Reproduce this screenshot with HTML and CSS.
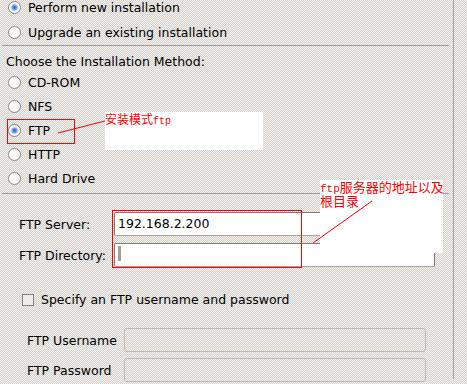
FILE: index.html
```html
<!DOCTYPE html>
<html lang="en">
<head>
    <meta charset="UTF-8">
    <title>Installation Method</title>
    <link rel="stylesheet" href="styles.css">
</head>
<body>

    <div class="page">
        <div class="panel">
            <div class="group group-top">
                <label class="choice"><span class="radio on"></span>Perform new installation</label>
                <label class="choice"><span class="radio"></span>Upgrade an existing installation</label>
            </div>
            <div class="sep"></div>

            <div class="heading">Choose the Installation Method:</div>
            <div class="group">
                <label class="choice"><span class="radio"></span>CD-ROM</label>
                <label class="choice"><span class="radio"></span>NFS</label>
                <label class="choice"><span class="radio on"></span>FTP</label>
                <label class="choice"><span class="radio"></span>HTTP</label>
                <label class="choice"><span class="radio"></span>Hard Drive</label>
            </div>
            <div class="sep sep-low"></div>

            <div class="server-form">
                <span class="field-label">FTP Server:</span>
                <div class="entry">192.168.2.200</div>
                <span class="field-label">FTP Directory:</span>
                <div class="entry"><span class="caret"></span></div>
            </div>

            <label class="check-row"><span class="checkbox"></span>Specify an FTP username and password</label>

            <div class="auth-form">
                <span class="field-label">FTP Username</span>
                <div class="entry disabled"></div>
                <span class="field-label">FTP Password</span>
                <div class="entry disabled"></div>
            </div>
        </div>

        <!-- notes pasted over the screenshot -->
        <div class="note note-mode">
            <div class="note-line">安装模式<span class="latin">ftp</span></div>
        </div>
        <div class="note note-server">
            <div class="note-line"><span class="latin">ftp</span>服务器的地址以及</div>
            <div class="note-line">根目录</div>
        </div>

        <svg class="marks" width="467" height="384" viewBox="0 0 467 384" shape-rendering="crispEdges">
            <rect x="7.5" y="119.5" width="67" height="24" fill="none" stroke="#ff0000" stroke-width="1"/>
            <rect x="112.5" y="210.5" width="189" height="57" fill="none" stroke="#ff0000" stroke-width="1"/>
            <line x1="58" y1="133" x2="105" y2="121" stroke="#ff0000" stroke-width="1" shape-rendering="auto"/>
            <line x1="313" y1="243" x2="372" y2="201" stroke="#ff0000" stroke-width="1" shape-rendering="auto"/>
        </svg>
    </div>

</body>
</html>
```

FILE: styles.css
```css
body {
    margin: 0;
    padding: 0;
    font-family: "DejaVu Sans", Verdana, sans-serif;
    font-size: 12.5px;
    color: #000;
}
.page {
    position: relative;
    width: 467px;
    height: 384px;
    overflow: hidden;
    background: repeating-conic-gradient(#d3d0cc 0 25%, #f4f3f1 0 50%) 0 0 / 2px 2px;
}
.panel {
    width: 454px;
    height: 384px;
    box-sizing: border-box;
    border-right: 1px solid #a29e98;
}

/* radio lists */
.group-top {
    margin-top: -5px;
}
.choice {
    display: flex;
    align-items: center;
    height: 24px;
    padding-left: 8px;
}
.group-top .choice {
    height: 25px;
}
.radio {
    width: 13px;
    height: 13px;
    box-sizing: border-box;
    margin-right: 7px;
    border: 1px solid #8c8882;
    border-radius: 50%;
    background: radial-gradient(circle at 40% 35%, #ffffff 0 55%, #e2e0dc 100%);
}
.radio.on {
    background: radial-gradient(circle at 50% 50%, #2c6ad4 0, #5d95e6 2px, #bcd4f4 3.2px, #ffffff 4.2px, #e8e6e2 100%);
}
.sep {
    height: 0;
    margin: 0 4px 0 2px;
    border-top: 1px solid #9d9994;
}
.sep-low {
    margin-top: 3px;
}
.heading {
    height: 24px;
    box-sizing: border-box;
    padding: 8px 0 0 6px;
    line-height: 16px;
}

/* entries */
.server-form {
    display: grid;
    grid-template-columns: 95px 321px;
    grid-auto-rows: 24px;
    row-gap: 7px;
    align-items: center;
    padding: 18px 0 0 19px;
}
.entry {
    height: 24px;
    box-sizing: border-box;
    padding-left: 3px;
    line-height: 22px;
    background: #fff;
    border: 1px solid #7f7a70;
    border-bottom-color: #a8a49c;
    border-radius: 2px;
}
.caret {
    display: inline-block;
    width: 3px;
    height: 15px;
    margin-top: 2px;
    vertical-align: top;
    background: #a49e93;
}
.entry.disabled {
    background: transparent;
    border: 1px solid #c3baa9;
    border-radius: 3px;
}

.check-row {
    display: flex;
    align-items: center;
    height: 16px;
    margin-top: 24px;
    padding-left: 22px;
}
.checkbox {
    width: 12px;
    height: 12px;
    box-sizing: border-box;
    margin: 2px 7px 0 0;
    border: 1px solid #86817a;
    background: #efede9;
}
.auth-form {
    display: grid;
    grid-template-columns: 97px 302px;
    grid-auto-rows: 24px;
    row-gap: 6px;
    align-items: center;
    margin-top: 21px;
    padding-left: 27px;
}

/* annotations */
.note {
    position: absolute;
    background: #fff;
    color: #ff0000;
    font-family: "Noto Sans CJK SC", sans-serif;
}
.note-line {
    white-space: nowrap;
}
.note .latin {
    font-family: "Liberation Mono", monospace;
}
.note-mode {
    left: 105px;
    top: 112px;
    width: 158px;
    height: 38px;
    font-size: 12px;
}
.note-mode .note-line {
    height: 14px;
    line-height: 14px;
}
.note-mode .latin {
    font-size: 10px;
}
.note-server {
    left: 320px;
    top: 180px;
    width: 123px;
    height: 73px;
    font-size: 13px;
}
.note-server .note-line {
    height: 14px;
    line-height: 14px;
}
.note-server .latin {
    font-size: 11px;
}
.marks {
    position: absolute;
    left: 0;
    top: 0;
    pointer-events: none;
}
```
